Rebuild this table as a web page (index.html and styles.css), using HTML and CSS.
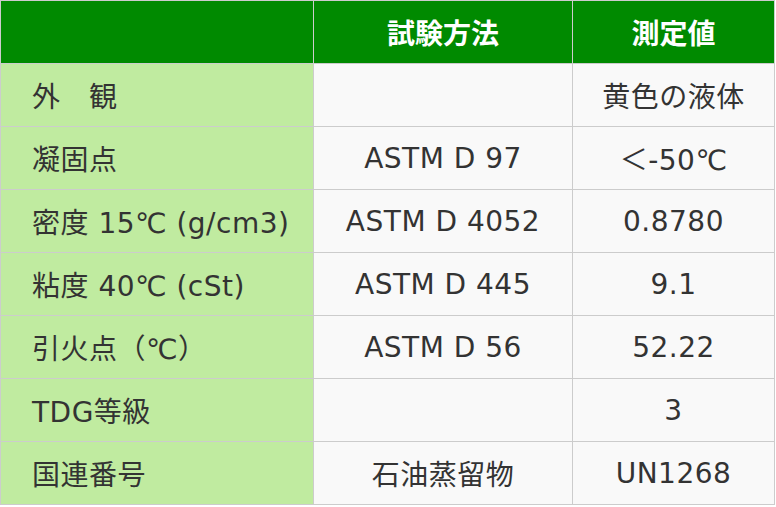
FILE: index.html
```html
<!DOCTYPE html>
<html lang="ja">
<head>
<meta charset="utf-8">
<link rel="stylesheet" href="styles.css">
</head>
<body>
<table class="spec">
  <colgroup>
    <col class="c1"><col class="c2"><col class="c3">
  </colgroup>
  <thead>
    <tr><th></th><th>試験方法</th><th>測定値</th></tr>
  </thead>
  <tbody>
    <tr><td class="label">外　観</td><td></td><td>黄色の液体</td></tr>
    <tr><td class="label">凝固点</td><td>ASTM D 97</td><td>＜-50℃</td></tr>
    <tr><td class="label">密度 15℃ (g/cm3)</td><td>ASTM D 4052</td><td>0.8780</td></tr>
    <tr><td class="label">粘度 40℃ (cSt)</td><td>ASTM D 445</td><td>9.1</td></tr>
    <tr><td class="label">引火点（℃）</td><td>ASTM D 56</td><td>52.22</td></tr>
    <tr><td class="label">TDG等級</td><td></td><td>3</td></tr>
    <tr><td class="label">国連番号</td><td>石油蒸留物</td><td>UN1268</td></tr>
  </tbody>
</table>
</body>
</html>
```
FILE: styles.css
```css
html, body {
  margin: 0;
  padding: 0;
  background: #ffffff;
}
.spec {
  border-collapse: collapse;
  table-layout: fixed;
  width: 774px;
  font-family: "DejaVu Sans", "Noto Sans CJK JP", sans-serif;
  font-size: 28px;
  letter-spacing: 0.5px;
  color: #333333;
}
.c1 { width: 313px; }
.c2 { width: 259px; }
.c3 { width: 202px; }
.spec th, .spec td {
  border: 1px solid #cccccc;
  height: 63px;
  padding: 0;
  text-align: center;
  vertical-align: middle;
  background: #f9f9f9;
  box-sizing: border-box;
}
.spec th {
  background: #008a00;
  color: #ffffff;
  font-weight: bold;
  letter-spacing: 0;
  font-family: "Noto Sans CJK JP", sans-serif;
}
.spec td.label {
  background: #c0eba0;
  text-align: left;
  padding-left: 31px;
}
```
